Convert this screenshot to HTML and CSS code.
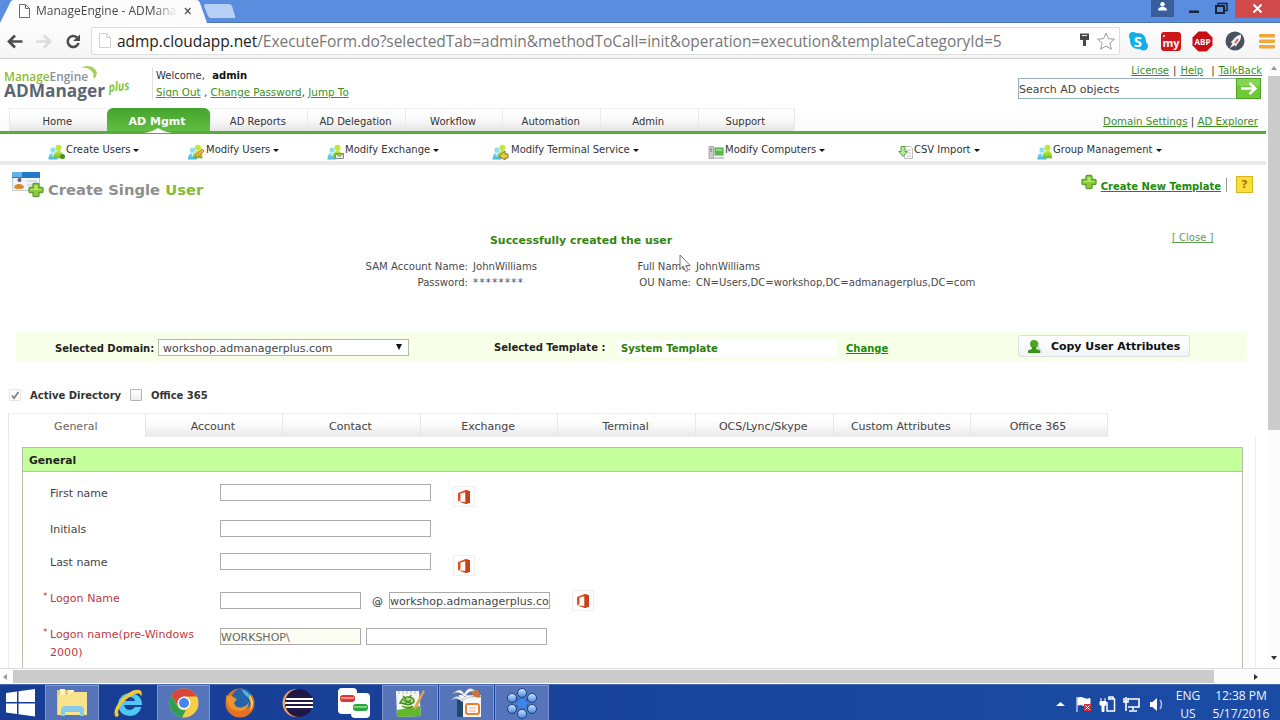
FILE: index.html
```html
<!DOCTYPE html>
<html lang="en">
<head>
<meta charset="utf-8">
<title>ManageEngine - ADManager Plus</title>
<link rel="stylesheet" href="styles.css">
</head>
<body>
<svg width="0" height="0" class="defs">
  <defs>
    <linearGradient id="gr" x1="0" y1="0" x2="0" y2="1"><stop offset="0" stop-color="#c5ee4a"/><stop offset="1" stop-color="#69bd1e"/></linearGradient>
    <linearGradient id="bl" x1="0" y1="0" x2="0" y2="1"><stop offset="0" stop-color="#8fe2f6"/><stop offset="1" stop-color="#45b4dc"/></linearGradient>
    <linearGradient id="ball" x1="0" y1="0" x2="0" y2="1"><stop offset="0" stop-color="#d5e8fc"/><stop offset="1" stop-color="#3e83df"/></linearGradient>
    <symbol id="people" viewBox="0 0 17 16">
      <circle cx="5" cy="6" r="2.600" fill="#8be0ec"/><path d="M.5 15.500c0-5 2-7 4.500-7s4.500 2 4.500 7z" fill="url(#bl)"/><path d="M4 9l1 4 1-4z" fill="#e8fbff"/>
      <circle cx="10.500" cy="3.800" r="3.100" fill="#c3e63a"/><path d="M6 14c0-5 2-7.500 4.500-7.500s4.500 2 4.500 8z" fill="url(#gr)"/>
    </symbol>
    <symbol id="plus" viewBox="0 0 16 16"><path d="M6 1.500h4q1 0 1 1v3h3q1 0 1 1v3q0 1-1 1h-3v3q0 1-1 1H6q-1 0-1-1v-3H2q-1 0-1-1v-3q0-1 1-1h3v-3q0-1 1-1z" fill="#8ccc3a" stroke="#5c9e33" stroke-width="1.300"/><path d="M6.500 3h3v4H13v1H2.500V7h4z" fill="#b9e468"/></symbol>
    <symbol id="office" viewBox="0 0 14 16"><path d="M1 4l7.500-3L13 2.300v11.400L8.500 15 1 12.200l7.500.8V3.200L3.500 4.500v6.700L1 12.200z" fill="#e0501f"/><path d="M8.500 1 13 2.300v11.400L8.500 15z" fill="#c9401a"/></symbol>
  </defs>
</svg>

<header class="titlebar">
  <svg class="tabshape" width="240" height="23" viewBox="0 0 240 23"><path d="M0 23 10 3Q11 0 14 0H196Q199 0 200 3L207 23z" fill="#fcfcfd"/><path d="M206 4h23q2 0 3 2l3 10q1 2-2 2h-22q-2 0-3-2l-4-10q0-2 2-2z" fill="#b9d0f5"/><path d="M19.500 4.500h6l4 4v9h-10zM25.500 4.500v4h4" fill="#fff" stroke="#6d6d6d"/><path d="m185 8 5.500 6m0-6-5.500 6" stroke="#555" stroke-width="1.300"/></svg>
  <span class="tabtext">ManageEngine - ADMana</span>
  <svg class="winctl" width="130" height="20" viewBox="0 0 130 20"><path d="M1 0h23v17H1z" fill="#3a5d9c"/><circle cx="12.500" cy="4.300" r="2.200" fill="#fff"/><path d="M8 10.500c0-5 9-5 9 0z" fill="#fff"/><path d="M39 10.500h10v2.500H39z" fill="#17243c"/><path d="M68 3.500h9v7h-9z" fill="none" stroke="#17243c" stroke-width="1.500"/><path d="M66 6h8v7h-8z" fill="#5b8dde" stroke="#17243c" stroke-width="2"/><path d="M85 0h45v18H85z" fill="#cf4a49"/><path d="m103.500 4.500 8 8m0-8-8 8" stroke="#fff" stroke-width="2"/></svg>
</header>

<div class="toolbar">
  <svg class="navicons" width="91" height="35" viewBox="0 23 91 35"><path d="M22.500 41.500H9m6-6-6 6 6 6" fill="none" stroke="#4d4d4d" stroke-width="2.700"/><path d="M36 41.500h14m-6-6 6 6-6 6" fill="none" stroke="#dcdcdc" stroke-width="2.700"/><path d="M77 37.500a5.500 5.500 0 1 0 1.500 5.500" fill="none" stroke="#4d4d4d" stroke-width="2.600"/><path d="M80 34.500v6.500h-7z" fill="#4d4d4d"/></svg>
  <div class="omnibox">
    <svg width="25" height="25" viewBox="92 28 25 25"><path d="M99.500 33.500h7l4 4v10h-11zM106.500 33.500v4h4" fill="#fff" stroke="#d0d0d0"/></svg>
    <span class="url"><b>admp.cloudapp.net</b>/ExecuteForm.do?selectedTab=admin&amp;methodToCall=init&amp;operation=execution&amp;templateCategoryId=5</span>
    <svg class="omniright" width="46" height="25" viewBox="1073 28 46 25"><path d="M1080 33.500h9v6.500h-3v6h-3v-6h-3z" fill="#484848"/><path d="M1082 35.500h5" stroke="#eee"/><path d="m1106 33 2.400 5.700 6.100.5-4.600 4 1.400 6-5.300-3.200-5.300 3.200 1.400-6-4.600-4 6.100-.5z" fill="#fff" stroke="#9a9a9a"/></svg>
  </div>
  <svg class="exts" width="160" height="35" viewBox="1120 23 160 35"><circle cx="1138" cy="41" r="8" fill="#10aeeb"/><circle cx="1133" cy="36" r="4" fill="#10aeeb"/><circle cx="1143.500" cy="46" r="4.500" fill="#10aeeb"/><text x="1138" y="46.500" text-anchor="middle" class="i-s">S</text>
  <rect x="1161" y="32" width="20" height="19" rx="3" fill="#cf161b"/><text x="1171" y="47" text-anchor="middle" class="i-my">my</text><circle cx="1164" cy="36" r="1" fill="#fff"/>
  <path d="M1198.500 31.500h8l6 6v8l-6 6h-8l-6-6v-8z" fill="#c70d16"/><text x="1202.500" y="44.500" text-anchor="middle" class="i-abp">ABP</text>
  <circle cx="1235" cy="41" r="9.500" fill="#4a5260"/><path d="M1241 34.500q-5 1-7.500 5l-3 3 2 .5-2.500 5 5-3 .5 2 2.500-4q3.500-3 3-8.500z" fill="#f3f3f3"/><path d="m1235 43 3-4" stroke="#e45e3e" stroke-width="2"/>
  <g fill="#f2a73b"><rect x="1259" y="34" width="16" height="3.500" rx="1"/><rect x="1259" y="39.500" width="16" height="3.500" rx="1"/><rect x="1259" y="45" width="16" height="3.500" rx="1"/></g></svg>
</div>

<div class="viewport">
  <main class="page">
    <div class="head">
      <div class="brand">
        <svg width="148" height="49" viewBox="0 59 148 49"><path d="M81 67.500q9-3.500 14 1.500 4 5-1 10 0-8-13-11.500z" fill="#a5d05b"/><path d="M80 69q9-2 13 6" fill="none" stroke="#fff" stroke-width="2"/><text x="4" y="81" class="me" textLength="84" lengthAdjust="spacingAndGlyphs"><tspan fill="#8ebd35">Manage</tspan><tspan fill="#8b929c">Engine</tspan></text><text x="4" y="97" class="adm" textLength="101" lengthAdjust="spacingAndGlyphs">ADManager</text><text x="109" y="92" class="pl" textLength="21" lengthAdjust="spacingAndGlyphs" transform="rotate(-6 109 93)">plus</text></svg>
      </div>
      <div class="user">
        <div>Welcome,&nbsp; <b>admin</b></div>
        <div><a>Sign Out</a> , <a>Change Password</a>, <a>Jump To</a></div>
      </div>
      <div class="tools">
        <div class="toplinks"><a>License</a><i>|</i><a>Help</a><i class="wide">|</i><a>TalkBack</a></div>
        <div class="search"><span>Search AD objects</span><svg width="25" height="21" viewBox="0 0 25 21"><rect width="25" height="21" fill="#6fc936"/><path d="M0 0h25v8H0z" fill="#84d552"/><path d="M.5.5h24v20H.5z" fill="none" stroke="#4ba122"/><path d="M5 10.500h14m-5.500-5.500 6 5.500-6 5.500" fill="none" stroke="#fff" stroke-width="2.400"/></svg></div>
      </div>
    </div>
    <div class="navrow">
      <nav class="mainnav"><span>Home</span><span class="on">AD Mgmt<svg width="28" height="5"><path d="M0 5q8-1 14-5 6 4 14 5z" fill="#fff"/></svg></span><span>AD Reports</span><span>AD Delegation</span><span>Workflow</span><span>Automation</span><span>Admin</span><span>Support</span></nav>
      <div class="sublinks"><a>Domain Settings</a> | <a>AD Explorer</a></div>
    </div>
    <nav class="submenu">
      <span><svg width="17" height="16"><use href="#people"/><circle cx="14.500" cy="12.500" r="2.500" fill="#4c8b1c"/></svg>Create Users<i></i></span>
      <span><svg width="17" height="16" class="w2"><use href="#people"/><path d="m8 14 1-3 6-6 2 2-6 6z" fill="#eeb13b" stroke="#b3651d" stroke-width=".7"/></svg>Modify Users<i></i></span>
      <span><svg width="17" height="16"><use href="#people"/><path d="M8.500 9.500h8v5h-8zl4 3 4-3" fill="#eee" stroke="#888"/></svg>Modify Exchange<i></i></span>
      <span><svg width="18" height="16"><use href="#people" width="17" height="16"/><path d="M7 12l6-5v3h3v4h-3v2z" fill="#e8cf4a" stroke="#8c7a22"/></svg>Modify Terminal Service<i></i></span>
      <span><svg width="16" height="16"><path d="M1 2.500h4.500v12H1z" fill="#c9ccc9" stroke="#aaa"/><path d="M2 5h2m-2 2h2" stroke="#777"/><path d="M6.500 3.500h9v8h-9z" fill="#53bb4a" stroke="#b6c6b4"/><path d="M8 5h6v2H8z" fill="#92dc88"/><path d="M5 14h11" stroke="#bbb" stroke-width="1.500"/></svg>Modify Computers<i></i></span>
      <span><svg width="15" height="16"><path d="M6.500 2.500h6l2 2v10h-8zM8 6h5M9 9h4m-4 3h4" fill="#fff" stroke="#bdbdbd"/><path d="M3 2.500h4v5h2.500L5 12.500.7 7.500H3z" fill="#b7e6a1" stroke="#4da937"/></svg>CSV Import<i></i></span>
      <span><svg width="15" height="16"><use href="#people" width="17" height="16"/></svg>Group Management<i></i></span>
    </nav>

    <section class="titlerow">
      <svg width="34" height="28" viewBox="0 0 34 28"><path d="M.5 1.500h27v18H.5z" fill="#f1f4f8" stroke="#c3cbd5"/><path d="M0 1h28v6H0z" fill="#2679c9"/><path d="M0 1h10v5H0z" fill="#64b3e8"/><circle cx="7.500" cy="9" r="2" fill="#5d6470"/><path d="M2 16q1-3 5-3t5 3q0 2-5 2t-5-2z" fill="#d98a2c"/><path d="M15 10h10m-10 4h8" stroke="#bccbd8"/><use href="#plus" x="16" y="11" width="16" height="16"/></svg>
      <h1>Create Single <em>User</em></h1>
      <div class="newtpl"><svg width="16" height="16"><use href="#plus"/></svg><a>Create New Template</a><span class="bar"></span><span class="help">?</span></div>
    </section>

    <section class="result">
      <div class="msg"><b>Successfully created the user</b><a>[ Close ]</a></div>
      <div class="details">
        <span>SAM Account Name:</span><span>JohnWilliams</span><span>Full Name:</span><span>JohnWilliams</span>
        <span>Password:</span><span class="stars">********</span><span>OU Name:</span><span>CN=Users,DC=workshop,DC=admanagerplus,DC=com</span>
      </div>
    </section>

    <section class="selection">
      <b class="l1">Selected Domain:</b>
      <div class="select">workshop.admanagerplus.com<i></i></div>
      <b class="l2">Selected Template :</b>
      <div class="tpl">System Template</div>
      <a class="change">Change</a>
      <div class="copybtn"><svg width="16" height="16"><path d="M8 3q6-1 4 5l3 4v2H6z" fill="#d1d9d3"/><circle cx="7" cy="5" r="4" fill="#4ba51f"/><path d="M5 8h4v2l4 1.500V14H1v-2.500L5 10z" fill="#369714"/></svg>Copy User Attributes</div>
    </section>

    <div class="checks"><span class="cb dis"><svg width="11" height="11"><path d="m2 5.500 2 2.500L8.500 2" fill="none" stroke="#888" stroke-width="2"/></svg></span><b class="c1">Active Directory</b><span class="cb"></span><b class="c2">Office 365</b></div>

    <nav class="formtabs"><span class="on">General</span><span>Account</span><span>Contact</span><span>Exchange</span><span>Terminal</span><span>OCS/Lync/Skype</span><span>Custom Attributes</span><span>Office 365</span></nav>

    <div class="panel">
      <div class="group">
        <h2>General</h2>
        <div class="row r1"><label>First name</label><span class="in w211"></span><span class="off"><svg width="14" height="16"><use href="#office"/></svg></span></div>
        <div class="row r2"><label>Initials</label><span class="in w211"></span></div>
        <div class="row r3"><label>Last name</label><span class="in w211"></span><span class="off"><svg width="14" height="16"><use href="#office"/></svg></span></div>
        <div class="row r4"><label class="req">Logon Name</label><span class="in w141"></span><span class="at">@</span><span class="in w161">workshop.admanagerplus.com</span><span class="off"><svg width="14" height="16"><use href="#office"/></svg></span></div>
        <div class="row r5"><label class="req">Logon name(pre-Windows 2000)</label><span class="in w141 ro">WORKSHOP\</span><span class="in w181"></span></div>
      </div>
    </div>
    <svg class="cursor" width="14" height="20" viewBox="0 0 14 20"><path d="M1 1v14l3.200-3 2.500 5.500 2.500-1-2.500-5h4.500z" fill="#fff" stroke="#777"/></svg>
  </main>
  <div class="vscroll"><i class="up"></i><div class="thumb"></div><i class="down"></i></div>
</div>
<div class="hscroll"><i class="left"></i><div class="thumb"></div><i class="right"></i></div>

<footer class="taskbar">
  <div class="apps">
    <span class="start"><svg width="30" height="30" viewBox="0 0 30 30"><path d="M1 5l11-1.500V14H1zM13.500 3.200 30 1v13H13.500zM1 15.500h11V26L1 24.500zM13.500 15.500H30v13L13.500 26.300z" fill="#fff"/></svg></span>
    <span class="open"><svg width="34" height="32" viewBox="0 0 34 32"><path d="M2 3h11l2 3h15v22H2z" fill="#edcc68"/><path d="M5 2h5v6H5zM13 3h6v5h-6z" fill="#fff3b9"/><path d="M3 8h12l2-3h15v23H3z" fill="#f8e28c"/><path d="M6 29v-6q0-4 5-4h13q5 0 5 4v6h-4v-4H10v4z" fill="#87cbea"/></svg></span>
    <span><svg width="34" height="32" viewBox="0 0 34 32"><path d="M30 18H12q1 5 6 5 3 0 5-3h6.500q-3 9-12 9-11-1-11.500-12 1-10 12-11 12 1 12 12zM12 14h11q-1-4-5.500-4T12 14z" fill="#50c7f2"/><path d="M4 30C-2 25 11 6 23 3q9-2 6 7 0-5-6-3C13 11 3 23 7 28q-1 2-3 2z" fill="#f3c736"/></svg></span>
    <span class="open"><svg width="32" height="32" viewBox="0 0 32 32"><circle cx="16" cy="16" r="14.500" fill="#f7ce45"/><path d="M3.500 8.500A14.500 14.500 0 0 1 29 9.500H16l-6.500 9z" fill="#da4639"/><path d="M3.500 8.500 10 20q3 4 8 3l-4 7.500A14.500 14.500 0 0 1 3.500 8.500z" fill="#2e9e57"/><circle cx="16" cy="16" r="6.500" fill="#fff"/><circle cx="16" cy="16" r="5" fill="#4587ee"/></svg></span>
    <span><svg width="32" height="32" viewBox="0 0 32 32"><circle cx="16" cy="16" r="14.500" fill="#e57121"/><circle cx="18" cy="12" r="10.500" fill="#2564a9"/><path d="M17 2q9 2 9 10l-5-4z" fill="#54b2dc"/><path d="M2 8q2 2 6 1 2 2 5 3l-3 4q2 6 9 4 4-1 6-5-1 10-11 9Q3 23 2 8z" fill="#ef942e"/><path d="M26 7q6 9 0 17 2-8-1-13z" fill="#f9d04a"/></svg></span>
    <span><svg width="34" height="32" viewBox="0 0 34 32"><circle cx="15.500" cy="16" r="14" fill="#f2a264"/><circle cx="18" cy="16" r="14" fill="#211747"/><path d="M5 12h27M4 16h28M5 20h27" stroke="#fff" stroke-width="2"/></svg></span>
    <span><svg width="34" height="32" viewBox="0 0 34 32"><rect x="1" y="1" width="19" height="26" rx="4" fill="#fff"/><rect x="14" y="6" width="19" height="25" rx="4" fill="#fff"/><rect x="3" y="8" width="15" height="7" rx="3" fill="#dc3838"/><path d="M4 11h13" stroke="#f38b87" stroke-width="2"/><rect x="16" y="17" width="15" height="7" rx="3" fill="#29a73e"/><path d="M17 20h13" stroke="#79d37e" stroke-width="2"/></svg></span>
    <span class="open"><svg width="32" height="32" viewBox="0 0 32 32"><path d="M2 4h23l2 25-24 1z" fill="#f4f7ee"/><path d="M3 23l23-4 1 10-24 1z" fill="#61b629"/><path d="M5 4v3m4-3v3m4-3v3m4-3v3m4-3v3" stroke="#b6bdb4"/><path d="M6 16q3-7 9-6 6 1 5 5-4 4-9 2-4-1-5-1zm2 3q6 4 11 0m-9-6 7 3m-7 1 7-4M9 9l3 3m5-4-1 3" fill="#a3d97a" stroke="#468b25" stroke-width="1.400"/><path d="m20 20 9-17 2 1-8 17-3 2z" fill="#dba353"/></svg></span>
    <span class="open"><svg width="34" height="32" viewBox="0 0 34 32"><path d="M9 8h22v22H9z" fill="#f7f7f7"/><path d="M7 13h6v17H7z" fill="#24476c"/><path d="M22 3h6l3 7q-6 2-9-3z" fill="#cd733d"/><path d="M2 7q9-8 12 0 5-9 11-3-7-1-10 6-6-7-13-3zM1 13q7-7 11 0 5-8 12-3-8-1-12 5-4-6-11-2z" fill="#fff" stroke="#7c8da3" stroke-width=".5"/><rect x="16" y="17" width="13" height="10" rx="2" fill="#fff" stroke="#e98032" stroke-width="2"/><path d="M19 21h7m-7 3h7" stroke="#e8af86"/></svg></span>
    <span class="open"><svg width="32" height="32" viewBox="0 0 32 32"><g stroke="#2f63b5" stroke-width="3"><path d="M16 5v22M6 10l20 12M26 10 6 22"/></g><g fill="url(#ball)" stroke="#193e81"><circle cx="16" cy="6" r="4.500"/><circle cx="6" cy="11" r="4.500"/><circle cx="26" cy="11" r="4.500"/><circle cx="6" cy="22" r="4.500"/><circle cx="26" cy="22" r="4.500"/><circle cx="16" cy="27" r="4.500"/></g><circle cx="16" cy="16.500" r="5" fill="#3c86eb"/></svg></span>
  </div>
  <div class="tray">
    <svg width="110" height="20" viewBox="1055 693 110 20"><path d="m1056 706 4.500-4 4.500 4z" fill="#fff"/><path d="M1077 697v15m1-14q3-1.500 6 .5 3 1.500 6 0v7q-3 1-6 0-3-1.500-6-.5z" fill="#fff" stroke="#fff"/><path d="M1084 704h7v7h-7z" fill="#da303a"/><path d="m1085.500 705.500 4 4m0-4-4 4" stroke="#fff"/><path d="M1101 698v4m4-4v4m-5-.5h6v3l-2 2v5h-2v-5l-2-2z" fill="#fff" stroke="#fff"/><path d="M1108 699h6.500v12H1107v-9M1109 697h4v2h-4z" fill="none" stroke="#fff" stroke-width="1.500"/><path d="M1128 699h11v8h-11m5 0v3m-4 1h8M1126 697v14m-2-13v4h4v-4" fill="none" stroke="#fff" stroke-width="1.600"/><path d="M1150 702h2.500l4.500-4v13l-4.500-4h-2.500z" fill="#fff"/><path d="M1160 700q3 4 0 9" fill="none" stroke="#a9c1e6" stroke-width="1.500"/></svg>
    <div class="lang">ENG<br>US</div>
    <div class="clock">12:38 PM<br>5/17/2016</div>
  </div>
</footer>
</body>
</html>
```
FILE: styles.css
```css
* { box-sizing: border-box; }
body { margin: 0; width: 1280px; height: 720px; overflow: hidden; background: #fff; font-family: "DejaVu Sans", Verdana, sans-serif; font-size: 10px; color: #333; display: flex; flex-direction: column; }
.defs { position: absolute; }
svg { display: block; flex: none; }
i, em { font-style: normal; }
a { color: #3c8f1f; text-decoration: underline; }

.titlebar { height: 23px; flex: none; background: #5b8dde; border-bottom: 1px solid #4c74b5; display: flex; position: relative; }
.tabshape { height: 23px; }
.tabtext { position: absolute; left: 36px; top: 2px; font: 12px/18px "Open Sans", sans-serif; white-space: nowrap; background: linear-gradient(90deg, #444 84%, #eee); background-clip: text; color: transparent; }
.winctl { margin-left: 910px; }
.toolbar { height: 36px; flex: none; display: flex; background: linear-gradient(#fdfdfd, #f5f5f5); border-bottom: 1px solid #cfcfcf; }
.omnibox { margin: 4px 0 0 0; width: 1029px; height: 28px; border: 1px solid #dedede; border-radius: 2px; background: #fff; display: flex; }
.url { font: 15.5px/26px "Open Sans", sans-serif; letter-spacing: -.048px; color: #777; white-space: nowrap; }
.url b { font-weight: 400; color: #222; }
.omniright { margin-left: auto; }
.i-s { font: bold 15px "Open Sans", sans-serif; fill: #fff; }
.i-my { font: bold 11px "Open Sans", sans-serif; fill: #fff; }
.i-abp { font: bold 8px "Open Sans", sans-serif; fill: #fff; }

.viewport { height: 609px; flex: none; display: flex; overflow: hidden; }
.page { width: 1268px; flex: none; height: 609px; overflow: hidden; position: relative; }
.head { height: 49px; display: flex; }
.brand { width: 152px; }
.me { font: 600 13px "Open Sans", sans-serif; }
.adm { font: bold 17px "Open Sans", sans-serif; fill: #5c6672; }
.pl { font: italic bold 13px "Open Sans", sans-serif; fill: #86c83f; }
.user { margin-top: 8px; height: 33px; padding-left: 3px; border-left: 1px solid #e1e1e1; line-height: 16px; font-size: 10.350px; }
.user div:first-child { font-size: 10px; line-height: 17px; }
.user b { color: #111; margin-left: 1px; }
.tools { margin-left: auto; width: 250px; }
.toplinks { height: 19px; line-height: 23px; display: flex; justify-content: flex-end; padding-right: 6px; }
.toplinks i { margin: 0 4px; }
.toplinks i.wide { margin-left: 8px; }
.search { width: 243px; height: 21px; display: flex; justify-content: space-between; border: 1px solid #97aebd; border-right: 0; font-size: 11px; line-height: 21px; color: #444; }
.search svg { margin-top: -1px; }

.navrow { height: 26px; display: flex; border-bottom: 3px solid #57ab3b; width: 1266px; background: linear-gradient(#fff, #fafafa); }
.mainnav { display: flex; margin-left: 9px; }
.mainnav span { width: 97.600px; height: 23px; line-height: 26px; padding-right: 2px; text-align: center; background: linear-gradient(#fefefe 30%, #f5f5f5 60%, #e5e5e5); border-left: 1px solid #eaeaea; border-top: 1px solid #f1f1f1; }
.mainnav span:last-child { border-right: 1px solid #e5e5e5; }
.mainnav .on { position: relative; width: 103px; background: linear-gradient(#43a42d, #62bd43); border: 0; border-radius: 6px 6px 0 0; color: #fff; font-weight: bold; font-size: 11px; line-height: 27px; }
.on svg { position: absolute; left: 37px; bottom: -2px; }
.sublinks { margin-left: auto; padding-right: 8px; line-height: 28px; font-size: 10.200px; }
.submenu { height: 31px; width: 1266px; padding-left: 49px; display: grid; grid-template-columns: 139px 140px 165px 216px 190px 139px auto; border-bottom: 4px solid #e9e9e9; background: #fff; line-height: 32px; }
.submenu span { display: flex; }
.submenu svg { margin-top: 10px; margin-left: -1px; margin-right: 1px; }
.submenu .w2 { width: 18px; }
.submenu i { border: 3px solid transparent; border-top-color: #111; height: 3px; margin: 15px 0 0 3px; }

.titlerow { height: 60px; display: flex; padding-left: 12px; }
.titlerow > svg { margin-top: 6px; }
h1 { margin: 14px 0 0 2px; font-size: 14.750px; line-height: 22px; color: #8e8e8e; }
h1 em { color: #84bb37; }
.newtpl { margin-left: auto; display: flex; padding: 9px 15px 0 0; font-weight: bold; }
.newtpl svg { margin: 0 4px 0 0; }
.newtpl a { line-height: 25px; color: #218a0b; }
.bar { width: 1px; height: 14px; background: #999; margin: 4px 9px 0 5px; }
.help { width: 17px; height: 17px; margin-top: 2px; background: #f8df3a; border: 1px solid #d6b51f; color: #a37109; text-align: center; line-height: 15px; font-size: 11px; }

.result { height: 107px; padding-top: 7px; }
.msg { display: flex; height: 27px; padding-left: 490px; color: #348512; line-height: 18px; font-size: 10.930px; }
.msg b { width: 682px; }
.msg a { line-height: 12px; font-size: 10px; color: #5f9a55; }
.details { display: grid; grid-template-columns: 468px 149px 64px auto; column-gap: 5px; line-height: 16px; font-size: 10.080px; color: #4a4a4a; }
.details span:nth-child(odd) { text-align: right; }
.details span:nth-child(4n+3) { padding-right: 5px; margin-left: -5px; width: 74px; }
.stars { letter-spacing: 1.350px; }

.selection { margin-left: 16px; width: 1231px; height: 30px; background: #f8ffe8; display: flex; color: #222; }
.l1 { margin-left: 39px; width: 103px; line-height: 33px; }
.select { width: 251px; height: 17px; margin-top: 7px; padding: 0 6px 0 4px; background: #fff; border: 1px solid #b2b8b2; font-size: 11px; line-height: 17px; color: #444; display: flex; justify-content: space-between; }
.select i { border: 3.500px solid transparent; border-top: 6px solid #111; margin-top: 4px; height: 6px; }
.l2 { margin-left: 85px; width: 123px; line-height: 31px; }
.tpl { width: 220px; height: 17px; margin-top: 8px; padding-left: 4px; background: #fff; line-height: 17px; font-weight: bold; color: #2c7d0c; }
.change { margin-left: 9px; width: 172px; line-height: 33px; font-weight: bold; color: #218a0b; }
.copybtn { width: 172px; height: 22px; margin-top: 3px; padding-left: 8px; border: 1px solid #dce0e0; border-radius: 3px; background: linear-gradient(#fff, #f3f4f7); display: flex; font-size: 10.950px; font-weight: bold; line-height: 21px; color: #111; }
.copybtn svg { margin: 3px 8px 0 0; }

.checks { height: 51px; display: flex; padding: 27px 0 0 9px; line-height: 14px; color: #333; }
.cb { width: 12px; height: 12px; border: 1px solid #b5b5b5; border-radius: 1px; background: linear-gradient(#fff, #eee); }
.cb.dis { border-color: #e6e6e6; background: #fcfcfc; }
.c1 { width: 100px; margin-left: 9px; }
.c2 { margin-left: 9px; }
.formtabs { display: flex; margin-left: 8px; height: 24px; }
.formtabs span { width: 137.600px; text-align: center; padding-right: 2px; font-size: 11px; line-height: 26px; color: #444; background: linear-gradient(#fff 30%, #f7f7f7 60%, #e9e9e9); border-top: 1px solid #eee; border-left: 1px solid #e6e6e6; border-bottom: 1px solid #eee; }
.formtabs .on { background: #fff; border-bottom-color: #fff; width: 136.600px; color: #666; }
.formtabs span:last-child { border-right: 1px solid #e6e6e6; }
.panel { margin-left: 8px; width: 1248px; height: 260px; padding: 10px 12px 0 13px; border: 1px solid #ededed; border-top: 0; }
.group { height: 250px; border: 1px solid #b3c2a4; }
h2 { margin: 0 0 12px; height: 24px; padding-left: 6px; background: #c5ff9b; border-bottom: 1px solid #9ed97e; font-size: 10.750px; line-height: 25px; color: #222; }
.row { display: flex; padding-left: 27px; font-size: 11px; }
.row label { width: 170px; flex: none; padding-right: 10px; line-height: 18px; color: #444; position: relative; top: 1px; }
.r1 { height: 36px; }
.r2 { height: 33px; }
.r3 { height: 39px; }
.r4 { height: 36px; }
.row .req { color: #bd3a42; top: -2px; letter-spacing: .05px; }
.req::before { content: "*"; position: absolute; left: -7px; top: -3px; font-size: 9px; }
.in { height: 17px; flex: none; border: 1px solid #ababab; background: #fff; font-size: 11px; line-height: 18px; overflow: hidden; white-space: nowrap; color: #444; }
.w211 { width: 211px; }
.w141 { width: 141px; }
.w161 { width: 161px; }
.w181 { width: 181px; margin-left: 5px; }
.ro { background: #fcfdf3; color: #666; }
.at { width: 28px; padding-left: 11px; line-height: 19px; }
.off { margin: 2px 0 0 22px; width: 22px; height: 21px; border: 1px solid #eee; padding: 2px 3px; }
.r4 .off { margin-top: -2px; }
.cursor { position: absolute; left: 679px; top: 195px; }

.vscroll { width: 12px; background: #fcfcfc; display: flex; flex-direction: column; align-items: center; }
.vscroll i { border: 3.500px solid transparent; }
.vscroll .up { border-bottom: 4px solid #999; margin: 4px 0 6px; }
.vscroll .down { border-top: 4px solid #333; margin-top: auto; margin-bottom: 5px; }
.vscroll .thumb { width: 12px; height: 354px; background: #cbcbcb; }
.hscroll { height: 16px; flex: none; display: flex; align-items: center; background: #fcfcfc; border-top: 1px solid #ddd; }
.hscroll i { border: 3.500px solid transparent; }
.hscroll .left { border-right: 4px solid #999; }
.hscroll .right { border-left: 4px solid #333; margin-left: 40px; }
.hscroll .thumb { width: 1201px; height: 13px; background: #cbcbcb; margin-left: 6px; }

.taskbar { height: 36px; flex: none; background: linear-gradient(90deg, #173c93, #1b4ca5); border-top: 1px solid #4669ae; display: flex; }
.apps { display: grid; grid-template-columns: 45px 55px 57px 54px 58px 57px 56px 57px 56px 55px; }
.apps span { display: flex; justify-content: center; align-items: flex-start; padding-top: 2px; }
.apps .open { background: #5674b9; border: 1px solid #7f97cc; border-bottom: 0; padding-top: 1px; margin-right: 1px; }
.apps .start { padding: 3px 5px 0 0; }
.tray { margin-left: auto; display: flex; color: #eef4ff; font: 12px/18px "Open Sans", sans-serif; text-align: center; }
.tray svg { margin-top: 8px; }
.lang { width: 46px; padding-top: 2px; }
.clock { width: 69px; padding: 2px 9px 0 0; white-space: nowrap; }
```
